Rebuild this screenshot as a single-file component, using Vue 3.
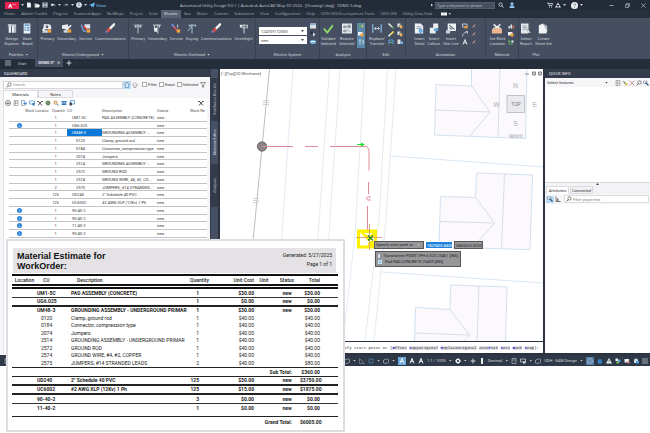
<script setup>
import { h, ref } from 'vue'

const glyphs = {
  file: '<path d="M2 1h6l2 2v8H2z" fill="#e8ebef"/>',
  open: '<path d="M1 3h4l1 1h4v2H4l-3 4z" fill="#c9ced6"/><path d="M4 6h8l-2 5H1z" fill="#f2f4f6"/>',
  save: '<path d="M1 1h10v10H1z" fill="#dfe3e8"/><path d="M3 1h6v4H3zM3 7h6v4H3z" fill="#5b6676"/>',
  undo: '<path d="M5 2L1 6l4 3V7c3-1 5 0 6 2 0-4-3-5-6-5z" fill="#e4e8ec"/>',
  redo: '<path d="M7 2l4 4-4 3V7C4 6 2 7 1 9c0-4 3-5 6-5z" fill="#7d8795"/>',
  print: '<circle cx="6" cy="6" r="5.6" fill="#eef1f4"/><path d="M3 5h6v4H3zM4 2h4v3H4z" fill="#a4b4c6"/>',
  plane: '<path d="M0 6L12 1 9 11 6 8 4 11 4 7z" fill="#66b9ea"/>',
  search: '<circle cx="5" cy="5" r="3.4" fill="none" stroke="#d5dae0" stroke-width="1.6"/><path d="M7.6 7.6L11 11" stroke="#d5dae0" stroke-width="2"/>',
  lens: '<circle cx="7" cy="5" r="3.4" fill="none" stroke="#555" stroke-width="1.4"/><path d="M4.5 7.6L1 11" stroke="#555" stroke-width="1.6"/>',
  user: '<circle cx="6" cy="3.4" r="3" fill="#8fcaf0"/><path d="M1 12c0-4 2-5 5-5s5 1 5 5z" fill="#8fcaf0"/>',
  cart: '<path d="M0 2h3l1 5h6l1-4H4" fill="none" stroke="#dfe3e8" stroke-width="1.5"/><circle cx="5" cy="10" r="1.2" fill="#dfe3e8"/><circle cx="9" cy="10" r="1.2" fill="#dfe3e8"/>',
  tri: '<path d="M6 1l3 5H3zM3 6l3 5H0zM9 6l3 5H6z" fill="#dfe3e8"/>',
  help: '<circle cx="6" cy="6" r="6" fill="#eef1f4"/><path d="M4 4.4c.3-2 4-2 4 .2 0 1.500-2 1.400-2 3M6 9v1.300" stroke="#4b5563" stroke-width="1.2" fill="none"/>',
  min: '<path d="M1 6h10" stroke="#cfd5dc" stroke-width="1.6"/>',
  restore: '<path d="M1 4h7v7H1zM4 4V1h7v7H8" fill="none" stroke="#cfd5dc" stroke-width="1.4"/>',
  close: '<path d="M1 1l10 10M11 1L1 11" stroke="#cfd5dc" stroke-width="1.5"/>',
  design: '<path d="M2 1h3v10H2zM6 2h3v9H6z" fill="#eceef1"/><path d="M1 1h10v2H1z" fill="#c2c8d0"/><path d="M9 3h2v8H9z" fill="#b5bcc6"/>',
  dash: '<path d="M2 0h8v12H2z" fill="#edf1f5"/><path d="M3 1h6v2H3zM3 4h2v2H3zM6 4h3v2H6zM3 7h2v2H3zM6 7h3v2H6z" fill="#6ba0cf"/>',
  ugPrimary: '<path d="M2 1h7l2 2v4H4L2 9H0l2-5z" fill="#e9edf0"/><circle cx="6" cy="4" r="1.600" fill="#4b5668"/><path d="M2 8h5v3H0z" fill="#d9dde2"/><path d="M7 7h4v4H7z" fill="#f2a13a"/>',
  ugSecondary: '<path d="M0 2l7-1 1 5-4 1-4-1z" fill="#e9edf0"/><path d="M11 2L4 9" stroke="#fff" stroke-width="1.6"/><path d="M2 8h5v3H2z" fill="#cfd5dc"/><path d="M7 7h4v4H7z" fill="#f2a13a"/>',
  ugService: '<path d="M4 1h7v5H5z" fill="#dfe4e9"/><path d="M0 1l3 8h4" stroke="#7fa3d8" stroke-width="1.500" fill="none"/><path d="M3 3l5 5" stroke="#e0564b" stroke-width="1.8"/><path d="M7 7h4v4H7z" fill="#f2a13a"/>',
  comms: '<path d="M11 1L5 7" stroke="#f1f3f5" stroke-width="3" stroke-linecap="round"/><path d="M6 6L2 10" stroke="#e0473f" stroke-width="3"/><path d="M2 9l-1 2" stroke="#5c8fe0" stroke-width="2"/>',
  pole: '<path d="M6 1v11M1 2h10M2 4h8M3 2v3M9 2v3" stroke="#b9c0ca" stroke-width="1.2" fill="none"/>',
  poleSec: '<path d="M7 1v11M1 2h10M3 2v3M9 2v3" stroke="#c9cfd7" stroke-width="1.200" fill="none"/><path d="M2 5h4v5H3z" fill="#eef0f3"/>',
  poleServ: '<path d="M1 1l7 8" stroke="#6d9be8" stroke-width="2"/><path d="M3 4l5 5" stroke="#e0473f" stroke-width="2"/><path d="M8 1v4" stroke="#dfe3e8"/><path d="M7 7h4v4H7z" fill="#f2a13a"/>',
  guy: '<path d="M6 1v11M2 2h9M6 3L1 9M3 2v2M10 2v2" stroke="#a9c4d8" stroke-width="1.200" fill="none"/>',
  street: '<path d="M6 1v11M1 2h10M2 2v3M10 2v4M3 5h6" stroke="#c6ccd4" stroke-width="1.3" fill="none"/><path d="M1 2h3v2H1z" fill="#eef0f3"/>',
  check: '<path d="M1 6l4 5 7-9" stroke="#86d86a" stroke-width="2.2" fill="none"/>',
  resolve: '<path d="M0 0h12v12H0z" fill="#e6e9ec"/><path d="M2 3h3v2H2zM7 2h3v3H7zM2 8h3v2H2zM6 7l4 3" fill="#8d96a3" stroke="#8d96a3"/>',
  replace: '<path d="M1 1v10M11 1v10" stroke="#8fc2e8" stroke-width="1.4"/><path d="M3 6h6M5 4L3 6l2 2M7 4l2 2-2 2" stroke="#d5dae0" fill="none"/>',
  detail: '<path d="M1 0h7l3 3v9H1z" fill="#f0f2f5"/><path d="M3 4h6M3 6h6" stroke="#8a94a3"/><circle cx="8" cy="9" r="2.600" fill="#69aee6"/>',
  callout: '<path d="M5 0h6v6H5z" fill="#edf0f3"/><path d="M1 5h7v7H1z" fill="#e9edf0"/><path d="M6 6h5v3H6z" fill="#5da7e6"/>',
  oneline: '<path d="M2 0h10v9H2z" fill="#eef1f4"/><path d="M4 2l6 5M4 5l3 2" stroke="#56616f" stroke-width="1.300"/><path d="M0 8h5v4H0z" fill="#c7cdd5"/>',
  work: '<path d="M2 1l8 7M10 1L3 8" stroke="#eceff2" stroke-width="1.800"/><path d="M0 7l6-2 6 2v5H0z" fill="#f0b58e"/><path d="M1 6l5-2 5 2" stroke="#fff" fill="none"/>',
  report: '<path d="M0 0h9v12H0z" fill="#e3e6ea"/><path d="M2 3h5M2 5h5M2 7h4" stroke="#8a94a3"/><path d="M7 6l5 5-3 .5z" fill="#fff" stroke="#444d5c" stroke-width=".4"/>',
  sheet: '<path d="M1 2l5-2 5 8-1 4H1z" fill="#f1f2f4"/><path d="M6 0l5 8v-5z" fill="#bcc3cc"/>',
  table: '<path d="M0 1h12v10H0z" fill="#e3e8ee"/><path d="M0 1h12v3H0zM4 4v7" fill="#89b7e0" stroke="#8a94a3" stroke-width=".6"/>',
  play: '<path d="M1 1h4v5H1z" fill="#1e2732"/><path d="M6 3l5 4-5 4z" fill="#cfe2f3"/>',
  db: '<ellipse cx="6" cy="6" rx="6" ry="4" fill="#6fb6e6"/><path d="M1 5h10" stroke="#e9f3fb" stroke-width="2"/>',
  flow: '<path d="M1 2l5 4-5 4" stroke="#5bb84b" stroke-width="1.800" fill="none"/><path d="M6 6h5M9 3v6" stroke="#e9c34a" stroke-width="1.600"/>',
  card: '<path d="M0 2h9v7H0z" fill="#eef1f4"/><circle cx="8" cy="8" r="3.500" fill="#f2a13a"/>',
  text: '<path d="M1 2h6M4 2v9M8 4h4M10 4v7" stroke="#dbe8f4" stroke-width="1.600"/>',
  pen: '<path d="M1 1l8 8" stroke="#eef1f4" stroke-width="3"/><path d="M7 7l4 4" stroke="#58b04e" stroke-width="3"/>',
  brush: '<path d="M11 1L5 7" stroke="#f5d94a" stroke-width="3.500"/><path d="M5 6l-4 5" stroke="#e8ebee" stroke-width="3"/>',
  nodes: '<path d="M2 11V2h8v9" stroke="#5aa6e0" stroke-width="2" fill="none"/><path d="M4 7h4" stroke="#62c05a" stroke-width="2"/>',
  copy: '<path d="M1 1h6v7H1z" fill="#e8ebee"/><path d="M5 4h6v7H5z" fill="#f0b26a" stroke="#454f61"/>',
  paste: '<path d="M1 1h6v9H1z" fill="#dfe3e8"/><path d="M6 5h6v5H6z" fill="#7fb2de"/>',
  leader: '<path d="M1 11C2 4 6 3 11 2M7 1h4v4" stroke="#e3e7eb" stroke-width="1.500" fill="none"/>',
  label: '<path d="M1 2h9v6H1z" fill="none" stroke="#e3e7eb" stroke-width="1.500"/><path d="M5 6h6v5H5z" fill="#e99b3c"/>',
  letter: '<path d="M2 11L6 1l4 10M3.500 7.500h5" stroke="#f0f2f5" stroke-width="1.800" fill="none"/>',
  erase: '<path d="M2 10l7-8M4 4l5 5" stroke="#c07c86" stroke-width="1.700"/>',
  bars: '<path d="M1 6h3v5H1zM5 3h3v8H5z" fill="#dfe3e8"/><path d="M9 5h3v6H9z" fill="#e0725f"/>',
  tree: '<path d="M2 1v9h8M2 5h5" stroke="#65b95b" stroke-width="1.800" fill="none"/><path d="M7 3h4v4H7z" fill="#eef1f4"/>',
  funnel: '<path d="M1 1h10L7 6v5L5 10V6z" fill="none" stroke="#555" stroke-width="1.200"/>',
  up: '<path d="M6 1l5 5H8v5H4V6H1z" fill="#fff" stroke="#777" stroke-width="1.100"/>',
  person: '<path d="M3 11V7L1 5l3-1V1h4v3l3 1-2 2v4z" fill="#d9ebfb" stroke="#4a6d90" stroke-width="1"/>',
  tprint: '<circle cx="6" cy="6" r="5" fill="none" stroke="#555" stroke-width="1.400"/><path d="M3 5h6v3H3z" fill="#777"/>',
  page: '<path d="M2 1h8v10H2z" fill="#fff" stroke="#777"/><path d="M2 4h8M2 7h8M5 1v10" stroke="#888"/>',
  export: '<path d="M1 1h6v10H1z" fill="#e8f2fb" stroke="#5a6a7a"/><path d="M5 7h6M9 4l3 3-3 3" stroke="#2f86d6" stroke-width="1.800" fill="none"/>',
  cal: '<path d="M1 2h10v6H1z" fill="#fff" stroke="#2f86d6" stroke-width="1.300"/><path d="M7 6h4v5H7z" fill="#2f6fb6"/>',
  tools: '<path d="M2 2l8 9M10 2L2 11" stroke="#4b4b4b" stroke-width="2"/><path d="M0 3h4M8 3h4" stroke="#4b4b4b" stroke-width="1.600"/>',
  gear: '<circle cx="6" cy="6" r="3.300" fill="none" stroke="#4f9a45" stroke-width="2.400"/><path d="M6 0v12M0 6h12M2 2l8 8M10 2l-8 8" stroke="#6a6a6a" stroke-width="1"/>',
  zoomin: '<circle cx="5" cy="5" r="3.500" fill="#f6d9a8" stroke="#a9733a" stroke-width="1.200"/><path d="M8 8l3 3" stroke="#2f86d6" stroke-width="2"/>',
  refresh: '<path d="M1 2h10v3H1zM1 7h10v3H1z" fill="#2f86d6"/><path d="M3 3l3 6 4-5" stroke="#333" fill="none"/>',
  win: '<path d="M3 1h8v7H3z" fill="#fff" stroke="#2f86d6" stroke-width="1.400"/><path d="M1 5h5v6H1z" fill="#3f4a57"/>',
  cross: '<path d="M1 1l10 10M11 1L1 11" stroke="#c98b93" stroke-width="1.700"/>',
  pick: '<path d="M1 1l5 8 1-4z" fill="#777"/><path d="M6 6h5v5H6z" fill="#d8c95c"/>',
  locate: '<path d="M1 2h7v5H1z" fill="#fff" stroke="#5a6a7a"/><path d="M5 5l6 6" stroke="#3d5a86" stroke-width="2.600"/>',
  sort: '<path d="M2 1v10h9" stroke="#555" stroke-width="1.600" fill="none"/><path d="M4 5h3v5H4z" fill="#777"/>',
  cube: '<path d="M1 4l6-2 4 1v6l-5 2-5-1z" fill="none" stroke="#b4bcc6" stroke-width="1.300"/>',
  green: '<path d="M1 1l5 2v6H1z" fill="#dfe6ec"/><path d="M4 4h7v7H4z" fill="#63c98a"/>',
  dashbox: '<path d="M2 2h8v8H2z" fill="none" stroke="#5f9fd0" stroke-width="1.500" stroke-dasharray="3 1"/>',
  angle: '<path d="M1 1v10h10M2 2l8 8" stroke="#8d97a5" stroke-width="1.300" fill="none"/>',
  figure: '<path d="M6 1L2 11M6 1l4 10M3 7h6M6 1v6" stroke="#eef2f6" stroke-width="1.800" fill="none"/>',
  cog: '<circle cx="6" cy="6" r="3.400" fill="none" stroke="#f0f3f6" stroke-width="2.400"/><path d="M6 0v2M6 10v2M0 6h2M10 6h2M2 2l1 1M9 9l1 1M10 2L9 3M2 10l1-1" stroke="#f0f3f6" stroke-width="1.800"/>',
  plus: '<path d="M6 1v10M1 6h10" stroke="#dfe4ea" stroke-width="1.800"/>',
  rule: '<path d="M4 0h4v12H4z" fill="#e9edf1"/>',
  sheetline: '<path d="M2 1h8v10H2zM2 4h8" fill="none" stroke="#b4bcc6" stroke-width="1.300"/>',
  monitor: '<path d="M1 2h10v6H1z" fill="none" stroke="#dfe4ea" stroke-width="1.400"/><path d="M6 7h5v4H6z" fill="#dfe4ea"/>',
  dot: '<circle cx="6" cy="6" r="5" fill="none" stroke="#b9cbe0" stroke-width="1.300"/><path d="M3 7l2 1 4-4" stroke="#b9cbe0" fill="none"/>',
  blue: '<circle cx="6" cy="7" r="4.500" fill="#3d97e6"/><path d="M4 6l3 2 4-6" stroke="#17416b" stroke-width="1.500" fill="none"/>',
  warn: '<path d="M6 0l6 11H0z" fill="#eef1f4"/><path d="M6 4v4" stroke="#333" stroke-width="1.300"/>',
  multi: '<path d="M1 1h5v5H1z" fill="#eef1f4"/><path d="M6 3h5v5H6z" fill="#4fa2e6"/><path d="M3 7h5v4H3z" fill="#8ac75a"/>',
  notify: '<path d="M1 2h9v7H1z" fill="#eef1f4"/><path d="M7 6h4v5H7z" fill="#de8a7e"/>',
  lock: '<path d="M2 5a4 4 0 018 0v5H2z" fill="#d5dbe2"/><path d="M6 6h6v5H6z" fill="#4fa2e6"/>',
  lines: '<path d="M0 2h12M0 6h12M0 10h12" stroke="#c9ced5" stroke-width="1.500"/>',
  cards: '<path d="M0 3h12v6H0z" fill="#f4f6f8"/><path d="M5 4h1v4H5z" fill="#9aa4b1"/>'
}
const Icon = (p) => h('svg', { viewBox: '0 0 12 12', 'aria-hidden': 'true', innerHTML: glyphs[p.name] })
Icon.props = ['name']

const menus = ['Home', 'Admin Toolkit', 'Plug-ins', 'Featured Apps', 'NetMaps', 'Project', 'Solar', 'Electric', 'Gas', 'Water', 'Comms', 'Substation', 'View', 'Configuration', 'Help', 'UDH-GIS Development Tools', 'UDH-GIS', 'Utility Data Hub']

const panels = [
  { key: 'palettes', title: 'Palettes', arrow: true, big: [['design', 'Design', 'Explorer'], ['dash', 'Dash', 'Board']] },
  { key: 'under', title: 'Electric Underground', arrow: true, big: [['ugPrimary', 'Primary'], ['ugSecondary', 'Secondary'], ['ugService', 'Service'], ['comms', 'Communications']] },
  { key: 'over', title: 'Electric Overhead', arrow: true, big: [['pole', 'Primary'], ['poleSec', 'Secondary'], ['poleServ', 'Service'], ['guy', 'Guying'], ['comms', 'Communications'], ['street', 'Streetlight']] },
  { key: 'system', title: 'Electric System', selects: true, big: [], small: [['table', 'play', 'db']] },
  { key: 'analysis', title: 'Analysis', big: [['check', 'Validate', 'Selected'], ['resolve', 'Resolve', 'Selected']], small: [['flow', 'card', 'text']], lit: true },
  { key: 'edit', title: 'Edit', big: [['replace', 'Replace/', 'Transfer']], small: [['pen', 'brush', 'nodes'], ['copy', 'copy', 'paste']] },
  { key: 'annotation', title: 'Annotation', big: [['detail', 'Insert', 'Detail'], ['callout', 'Insert', 'Callout'], ['oneline', 'Insert', 'One Line']], small: [['label', 'leader', 'letter'], ['erase', 'erase', 'erase']] },
  { key: 'material', title: 'Material', big: [['work', 'Set Work', 'Location']], small: [['bars', 'card', 'tree']] },
  { key: 'plot', title: 'Plot', big: [['report', 'Select', 'Report'], ['sheet', 'Create', 'Sheet Set']] }
]

const materials = [
  ['', '1', 'UM1-5C', 'PAD ASSEMBLY (CONCRETE)'],
  ['i', '1', 'UG6.025', ''],
  ['', '1', 'UM48-3', 'GROUNDING ASSEMBLY -...'],
  ['', '1', '0120', 'Clamp, ground rod'],
  ['', '1', '0184', 'Connector, compression type'],
  ['', '1', '2074', 'Jumpers'],
  ['', '1', '2514', 'GROUNDING ASSEMBLY -...'],
  ['', '1', '2572', 'GROUND ROD'],
  ['', '1', '2574', 'GROUND WIRE, #4, #2, CO...'],
  ['', '2', '2575', 'JUMPERS, #14 STRANDED...'],
  ['', '125', 'UD240', '2" Schedule 40 PVC'],
  ['', '125', 'UC6002', '#2 AWG XLP (12Kv)  1 Ph'],
  ['i', '1', '90-40-2', ''],
  ['i', '1', '90-40-2', ''],
  ['i', '1', '11-40-2', ''],
  ['i', '1', '90-40-2', '']
]

const estimate = [
  ['head line', 'UM1-5C', 'PAD ASSEMBLY (CONCRETE)', '1', '$30.00', 'new', '$30.00'],
  ['head thick', 'UG6.025', '', '1', '$0.00', 'new', '$0.00'],
  ['first', 'UM48-3', 'GROUNDING ASSEMBLY - UNDERGROUND PRIMAR', '1', '$30.00', 'new', '$30.00'],
  ['item', '0120', 'Clamp, ground rod', '1', '$40.00', '', '$40.00'],
  ['item alt', '0184', 'Connector, compression type', '1', '$40.00', '', '$40.00'],
  ['item', '2074', 'Jumpers', '1', '$40.00', '', '$40.00'],
  ['item alt', '2514', 'GROUNDING ASSEMBLY - UNDERGROUND PRIMAR', '1', '$40.00', '', '$40.00'],
  ['item', '2572', 'GROUND ROD', '1', '$40.00', '', '$40.00'],
  ['item alt', '2574', 'GROUND WIRE, #4, #2, COPPER', '1', '$40.00', '', '$40.00'],
  ['item', '2575', 'JUMPERS, #14 STRANDED LEADS', '2', '$40.00', '', '$80.00'],
  ['sum', '', '', '', '', 'Sub Total:', '$360.00'],
  ['head thick', 'UD240', '2" Schedule 40 PVC', '125', '$30.00', 'new', '$3750.00'],
  ['head thick', 'UC6002', '#2 AWG XLP (12Kv)  1 Ph', '125', '$15.00', 'new', '$1875.00'],
  ['head line', '90-40-2', '', '3', '$0.00', 'new', '$0.00'],
  ['last', '11-40-2', '', '1', '$0.00', 'new', '$0.00'],
  ['grand', '', '', '', '', 'Grand Total:', '$6005.00']
]

const toolbar = ['tprint', 'page', 'export', 'cal', 'tools', 'gear', 'zoomin', 'refresh', 'win']
const keywords = ['Offset', 'CopyOriginal', 'ReplaceOriginal', 'autoPath', 'Sets', 'Bank', 'Snap']
const hotAt = { autoPath: 4 }
const parts = (k) => {
  const i = hotAt[k] || 0
  return [k.slice(0, i), k[i], k.slice(i + 1)]
}

const voltage = ref('12470Y/7200V')
const state = ref('new')
</script>

<template>
  <div class="app">
    <header class="titlebar">
      <div class="quick">
        <button class="logo" aria-label="Application menu">A<span>•••</span></button>
        <i class="caret"></i>
        <Icon name="file" /><Icon name="open" /><Icon name="save" /><Icon name="undo" /><i class="caret"></i>
        <Icon name="redo" /><i class="caret"></i><Icon name="print" /><i class="caret"></i>
        <a class="share" href="#"><Icon name="plane" />Share</a>
      </div>
      <div class="caption">
        <span>Automated Utility Design 9.0.1 | Autodesk AutoCAD Map 3D 2024 - [Drawing1.dwg]</span>
        <span>DEMO 5.dwg</span>
      </div>
      <div class="find">
        <i class="play"></i>
        <input type="text" aria-label="Search" placeholder="Type a keyword or phrase" />
        <Icon name="search" /><Icon name="user" />
      </div>
      <div class="extras"><Icon name="cart" /><Icon name="tri" /><i class="caret"></i><Icon class="round" name="help" /><i class="caret"></i></div>
      <div class="window"><Icon name="min" /><Icon name="restore" /><Icon name="close" /></div>
    </header>

    <nav class="menu">
      <a v-for="m in menus" :key="m" href="#" :class="{ on: m === 'Electric' }">{{ m }}</a>
      <Icon name="cards" /><i class="caret"></i>
    </nav>

    <section class="ribbon">
      <div v-for="p in panels" :key="p.key" class="panel" :class="p.key">
        <div class="tools">
          <div v-if="p.selects" class="selects">
            <div class="pull"><select v-model="voltage" aria-label="Voltage"><option>12470Y/7200V</option></select><i class="caret"></i></div>
            <div class="pull"><select v-model="state" aria-label="State"><option>new</option></select><i class="caret"></i></div>
          </div>
          <button v-for="b in p.big" :key="b[1] + b[2]" class="big">
            <Icon :name="b[0]" /><span>{{ b[1] }}</span><span v-if="b[2]">{{ b[2] }}</span>
          </button>
          <div v-for="(col, ci) in p.small" :key="ci" class="col" :class="{ lit: p.lit }">
            <Icon v-for="(s, si) in col" :key="si" :name="s" />
          </div>
        </div>
        <div class="name">{{ p.title }}<i v-if="p.arrow" class="caret"></i></div>
      </div>
    </section>

    <nav class="docs">
      <Icon name="lines" />
      <a href="#">Start</a><i class="slash">/</i>
      <a class="on" href="#">DEMO 5*<b>✕</b></a>
      <button aria-label="New drawing"><Icon name="plus" /></button><i class="slash">/</i>
    </nav>

    <main class="work">
      <section class="dashboard">
        <h2>DASHBOARD</h2>
        <div class="box">
          <div class="filterbar">
            <label class="search"><Icon name="lens" /><input type="text" aria-label="Search materials" placeholder="Search" /></label>
            <button class="lit" aria-label="Person"><Icon name="person" /></button>
            <button aria-label="Up"><Icon name="up" /></button>
            <label class="first"><input type="checkbox" />Filter</label>
            <label><input type="checkbox" />Exact</label>
            <label><input type="checkbox" />Selected</label>
            <Icon name="funnel" />
          </div>
          <div class="tabs"><button class="on">Materials</button><button>Notes</button></div>
          <div class="sheet">
            <div class="icons"><Icon v-for="t in toolbar" :key="t" :name="t" /><Icon class="end" name="tools" /></div>
            <table>
              <colgroup><col class="c0" /><col class="c1" /><col class="c2" /><col class="c3" /><col class="c4" /><col class="c5" /><col class="c6" /></colgroup>
              <thead><tr><th></th><th>Work Locatio</th><th>Quantit</th><th>CU</th><th>Description</th><th>Status</th><th>Work Ne</th></tr></thead>
              <tbody>
                <tr v-for="(r, i) in materials" :key="i">
                  <td><span v-if="r[0]" class="info">i</span></td><td></td>
                  <td class="num">{{ r[1] }}</td>
                  <td class="cu" :class="{ sel: i === 2, sub: i > 2 && i < 10 }">{{ r[2] }}</td>
                  <td>{{ r[3] }}</td><td>new</td><td></td>
                </tr>
              </tbody>
            </table>
          </div>
        </div>
      </section>

      <nav class="side">
        <button>Validation Results</button><button class="on">Material Editor</button><button>Analysis</button>
      </nav>

      <section class="canvas">
        <svg class="map" viewBox="220 69 323 272" preserveAspectRatio="xMinYMin slice">
          <g fill="none" stroke="#e4ebf4" stroke-width="1">
            <path d="M293 69L275 341M329.500 69L311 341M340 69L322 341M364.500 69L355 235 343 341M387.500 69L379 220 365 341M396 69L386 220 374 341" />
            <path d="M391 156L543 167M382 272L543 283" stroke="#d9e6f2" />
          </g>
          <g fill="#fbf9fc" stroke="#d2e1ef" stroke-width="1">
            <path d="M471.500 69V86L436 84.500 434.500 135 525.500 138.500 527 69" />
            <path d="M476.500 173L532.500 175 530 249.600 439 247 440.500 196.500 475.500 197.500z" />
            <path d="M414.500 342L415.500 307.500 450 309.500 450.500 285 507 287 505.500 342" />
          </g>
          <g fill="none" stroke="#dcdce4" stroke-width="1">
            <path d="M471.500 86L490 112 470 136M435 110L490 112M500 69L498 137" />
            <path d="M475.500 197.500L494.500 223 472 248M439.500 221.500L494 223M504.500 174L501.500 249" />
            <path d="M450 309.500L469.500 335 464 341M415 333L469 335M479 286L477 341" />
          </g>
          <path d="M269.500 69L243.500 341" stroke="#bdbdbd" stroke-width="1" />
          <g fill="#fff" stroke="#c9c9c9" stroke-width=".8">
            <path d="M263 100.500h6M263 102.500h6M263 104.500h6M253 198.500h6M253 200.500h6M253 202.500h6" />
          </g>
          <circle cx="262" cy="146.500" r="4.600" fill="#8b8788" stroke="#66605f" />
          <g fill="none" stroke="#e08a97" stroke-width="1">
            <path d="M262 146.500h31M305 146.500h13M330 146.500h35q4 0 4 5v19M368.500 182v12M367.500 206v24" />
            <path d="M371 197h-3q-4 1.500 0 3h3" />
          </g>
          <path d="M357 144h4v-1.500l4 2-4 2V145h-4z" fill="#1ddd2b" />
          <path d="M358.500 231h17v16h-17z" fill="#fff" stroke="#fff200" stroke-width="3" />
          <path d="M360 232l9 10 8-10zM369 241h7v7h-9z" fill="#fff200" />
          <path d="M363 233h10l-4 3z" fill="#fff" />
          <path d="M356 237.500h26M369.500 224v26" stroke="#d98d72" stroke-width=".8" />
          <path d="M368 235.500l5 5M373 235.500l-5 5" stroke="#1f8a2a" stroke-width="1.300" />
          <path d="M507 95.500h17.500v17H507z" fill="#e9e9ee" stroke="#c2c2c6" />
          <path d="M509 136h14" stroke="#e3e3ea" stroke-width="4" />
          <path d="M525 74h4M532.500 72h3v3h-3zM538.500 72h3v3h-3z" fill="#ccc" stroke="#888" stroke-width="1" />
          <g class="compass"><text x="515.500" y="87.500">N</text><text x="496.500" y="106.500">W</text><text x="534.500" y="106.500">E</text><text x="515.500" y="125.500">S</text></g>
          <g class="cube"><text x="516" y="106">TOP</text><text class="wcs" x="515.500" y="137.500">WCS ▽</text></g>
        </svg>
        <p class="view">[–][Top][2D Wireframe]</p>
        <div class="dyn">
          <label class="prompt" for="px">Specify start point or <b>▫</b></label>
          <input id="px" type="text" class="hot" value="1829403.8450" />
          <input type="text" aria-label="Y" value="5865023.0030" />
        </div>
        <ul class="pop">
          <li><i></i>Transformer PDMT.1PH.6.025 25461 [INS]</li>
          <li><i></i>Pad PAD.CONCRETE 25459 [INS]</li>
        </ul>
        <p class="cmd">Specify start point or [<template v-for="(k, i) in keywords" :key="k">{{ i ? ' ' : '' }}<span>{{ parts(k)[0] }}<b>{{ parts(k)[1] }}</b>{{ parts(k)[2] }}</span></template>]:</p>
      </section>

      <aside class="info-pane">
        <h2>QUICK INFO</h2>
        <div class="pick"><label>Select features<i class="caret"></i></label><Icon name="page" /><Icon name="pick" /><Icon name="cross" /><Icon name="lens" /><Icon name="locate" /></div>
        <div class="list"></div>
        <div class="split"><i></i></div>
        <div class="tabs"><button class="on">Attributes</button><button>Connected</button></div>
        <div class="props"><button class="lit" aria-label="Grouped"><Icon name="locate" /></button><button aria-label="Sorted"><Icon name="sort" /></button>
          <label><Icon name="lens" /><input type="text" aria-label="Filter" placeholder="Filter properties" /></label></div>
      </aside>
    </main>

    <footer class="status">
      <Icon class="start" name="sheetline" />
      <i class="caret"></i><Icon name="green" /><Icon name="cube" /><i class="caret"></i><Icon name="angle" /><Icon name="dashbox" /><i class="caret"></i><Icon name="cube" /><i class="caret"></i>
      <span class="lit"><Icon name="figure" /></span><Icon name="figure" /><Icon name="figure" /><span>1:1 / 100%</span><i class="caret"></i>
      <Icon name="cog" /><i class="caret"></i><Icon name="plus" /><Icon name="rule" /><span>Decimal</span><i class="caret"></i><Icon name="sheetline" /><Icon name="monitor" /><i class="caret"></i>
      <Icon name="cube" /><span>UDH - EAM Design</span><i class="caret"></i><span class="lit dim"><Icon name="dot" /></span><Icon name="blue" /><Icon name="warn" /><Icon name="multi" /><Icon name="notify" /><Icon name="lock" /><Icon name="lines" />
    </footer>

    <article class="report">
      <header>
        <h1>Material Estimate for<br />WorkOrder:</h1>
        <div><p>Generated: 5/27/2025</p><p>Page 1 of 1</p></div>
      </header>
      <table>
        <colgroup><col class="k0" /><col class="k1" /><col class="k2" /><col class="k3" /><col class="k4" /><col class="k5" /><col class="k6" /><col class="k7" /><col /></colgroup>
        <thead><tr><th>Location</th><th class="desc">CU</th><th class="desc">Description</th><th>Quantity</th><th class="r">Unit Cost</th><th>Unit</th><th>Status</th><th class="r">Total</th><th></th></tr></thead>
        <tbody>
          <tr v-for="(r, i) in estimate" :key="i" :class="r[0]">
            <td></td><td class="code">{{ r[1] }}</td><td>{{ r[2] }}</td><td class="q">{{ r[3] }}</td><td class="r">{{ r[4] }}</td>
            <td></td><td class="s"><span>{{ r[5] }}</span></td><td class="r">{{ r[6] }}</td><td></td>
          </tr>
        </tbody>
      </table>
    </article>
  </div>
</template>

<style>
body { margin: 0; background: #fff; }
</style>

<style scoped>
* { box-sizing: border-box; }
.app { position: relative; min-height: 100vh; overflow: hidden; font: 4px/5px Roboto, "Open Sans", sans-serif; color: #333; background: #fff; }
button, input, select { font: inherit; color: inherit; margin: 0; padding: 0; border: 0; background: none; border-radius: 0; min-width: 0; }
button { display: flex; align-items: center; justify-content: center; }
a { color: inherit; text-decoration: none; }
h1, h2, p, ul { margin: 0; padding: 0; font-weight: 400; list-style: none; }
i { font-style: normal; }
svg { display: block; flex: none; width: 6px; height: 6px; }
.caret { flex: none; width: 3px; height: 2px; background: currentColor; clip-path: polygon(0 0, 100% 0, 50% 100%); }

.titlebar { display: flex; align-items: center; height: 10px; background: #222b37; color: #c6ccd4; }
.quick { display: flex; align-items: center; gap: 2px; width: 180px; padding-left: 5px; }
.logo { width: 14px; height: 7px; background: #e5224f; color: #fff; font-weight: 700; font-size: 6px; }
.logo span { font-size: 3px; }
.share { display: flex; align-items: center; gap: 1px; color: #79bfe8; }
.caption { display: flex; gap: 3px; flex: 1; white-space: nowrap; font-family: "Open Sans", sans-serif; }
.find { display: flex; align-items: center; gap: 3px; width: 116px; }
.find input { flex: none; width: 60px; height: 7px; padding-left: 1px; background: #454f60; border: 1px solid #525d6e; }
input::placeholder { color: inherit; opacity: .8; }
.play { width: 2px; height: 3px; margin-right: -1px; background: #ddd; clip-path: polygon(0 0, 100% 50%, 0 100%); }
.find svg:last-child { margin-left: 2px; }
.extras { display: flex; align-items: center; gap: 2px; width: 62px; }
.extras .round { margin-left: 3px; width: 7px; height: 7px; }
.window { display: flex; gap: 11px; width: 41px; }
.window svg { width: 5px; height: 5px; }

.menu { display: flex; align-items: center; height: 8px; padding-left: 1px; background: #26303c; color: #a3abb6; white-space: nowrap; font-family: "Open Sans", sans-serif; }
.menu a { padding: 0 3px; line-height: 8px; }
.menu a.on { background: #566173; color: #f2f4f6; }
.menu svg { margin: 0 1px 0 6px; }

.ribbon { display: flex; height: 41px; background: #454f61; color: #ccd2da; }
.panel { flex: none; display: flex; flex-direction: column; border-right: 1px solid #39424f; }
.palettes { width: 38px; } .under { width: 91px; } .over { width: 127px; } .system { width: 64px; }
.analysis { width: 47px; } .edit { width: 39px; } .annotation { width: 80px; } .material { width: 33px; }
.plot { width: 34px; border-right: 0; }
.tools { display: flex; justify-content: center; gap: 3px; flex: 1; padding-top: 5px; }
.big { flex-direction: column; justify-content: flex-start; height: 24px; white-space: nowrap; }
.big svg { width: 10px; height: 11px; margin-bottom: 2px; }
.selects { display: flex; flex-direction: column; gap: 1px; padding-top: 4px; }
.pull { display: flex; align-items: center; width: 48px; height: 8px; padding: 0 3px 0 2px; background: #fff; color: #444; }
.pull select { appearance: none; flex: 1; height: 8px; }
.col { display: flex; flex-direction: column; gap: 2px; }
.col.lit { padding: 0 1px; height: 25px; background: #5b87ab; }
.name { display: flex; align-items: center; justify-content: center; gap: 2px; height: 8px; padding-bottom: 1px; }

.docs { display: flex; align-items: center; gap: 3px; height: 10px; padding: 0 0 2px 5px; background: #242e3a; color: #c3c9d1; }
.docs a { padding: 0 1px; }
.docs a:first-of-type { margin-left: 3px; }
.docs .slash { color: #56606e; }
.docs .on { display: flex; gap: 3px; height: 8px; padding: 0 3px; background: #454f61; color: #fff; line-height: 8px; font-weight: 500; }
.docs .on b { font-weight: 400; }

.work { display: flex; background: #343c4d; }
h2 { height: 8px; padding-left: 4px; font-size: 4px; line-height: 9px; color: #e3e6ea; background: #343b4b; }
.dashboard { width: 211px; display: flex; flex-direction: column; }
.box { flex: 1; margin-right: 1px; padding: 3px 3px 0; background: #f6f6f8; }
.filterbar { display: flex; align-items: center; height: 9px; }
.filterbar .search { display: flex; align-items: center; gap: 1px; width: 120px; height: 8px; padding-left: 2px; border: 1px solid #d5d5da; background: #fff; }
.filterbar .search input { flex: 1; color: #777; }
.filterbar button { width: 8px; height: 8px; }
.lit { background: #b9dcf7; }
.filterbar label { display: flex; align-items: center; gap: 1px; margin-right: 2px; }
.filterbar .search { margin-right: 0; }
.filterbar .first { margin-left: 3px; }
input[type=checkbox] { appearance: none; width: 5px; height: 5px; border: 1px solid #aaa; background: #fff; }
.tabs { display: flex; height: 8px; margin-top: 1px; }
.tabs button { width: 35px; border: 1px solid #dcdce0; }
.tabs .on { background: #fff; border-bottom: 0; }
.sheet { height: 255px; background: #fff; border-left: 1px solid #e0e0e4; }
.sheet .icons { display: flex; align-items: center; gap: 2px; height: 9px; padding-left: 1px; }
.icons .end { margin-left: auto; margin-right: 3px; }
table { border-collapse: separate; border-spacing: 0; table-layout: fixed; width: 100%; }
td, th { padding: 0; font-weight: 400; text-align: left; white-space: nowrap; line-height: 5px; }
.sheet th { height: 7px; color: #555; }
.sheet td { height: 8px; line-height: 5px; border-bottom: 1px solid #c4c4c4; }
.sheet tr:nth-child(4n+2) td { height: 7px; }
.sheet td:first-child { text-align: right; }
.sheet table { margin-left: 5px; width: 198px; }
.c0 { width: 16px; } .c1 { width: 27px; } .c2 { width: 15px; } .c3 { width: 35px; } .c4 { width: 55px; } .c5 { width: 33px; } .c6 { width: 17px; }
.sheet .num { text-align: center; padding-right: 8px; }
.cu { padding-left: 5px; }
.cu.sub { padding-left: 9px; }
.cu.sel { background: #0a78d7; color: #fff; }
.info { display: inline-block; width: 5px; height: 5px; border-radius: 50%; background: #2b83dc; color: #fff; text-align: center; margin-right: 3px; }

.side { width: 9px; display: flex; flex-direction: column; background: #465064; border-right: 2px solid #2b3341; padding-top: 9px; }
.side button { height: 43px; background: #343b4b; color: #aab1bd; writing-mode: vertical-rl; transform: rotate(180deg); white-space: nowrap; }
.side .on { background: #465064; color: #d6dae0; }

.canvas { position: relative; flex: 1; min-width: 0; background: #fff; border-bottom: 2px solid #2b3341; }
.map { width: 100%; height: 272px; }
.compass { font: 700 7px "Liberation Sans", sans-serif; text-anchor: middle; fill: #c6c6ca; }
.cube { font-size: 5px; text-anchor: middle; fill: #777; }
.wcs { font-size: 4px; fill: #aaa; }
.view { position: absolute; left: 1px; top: 2px; color: #555; }
.dyn { position: absolute; left: 154px; top: 172px; display: flex; gap: 1px; height: 8px; white-space: nowrap; }
.prompt { width: 50px; padding-left: 1px; line-height: 6px; background: #97979a; border: 1px solid #555; color: #222; }
.dyn input { width: 29px; height: 8px; padding-left: 1px; background: #97979a; border: 1px solid #555; color: #222; }
.dyn .hot { width: 28px; border-color: #fff; background: #1f83dc; color: #fff; }
.prompt b { color: #fff; padding-left: 4px; }
.pop { position: absolute; left: 155px; top: 182px; width: 86px; padding: 1px 2px; background: #97979a; border: 1px solid #555; color: #222; line-height: 6px; white-space: nowrap; }
.pop li { display: flex; align-items: center; gap: 3px; }
.pop i { width: 4px; height: 4px; background: #8fc3ea; border: 1px solid #c9e2f5; }
.cmd { height: 12px; border-top: 1px solid #2b3341; text-align: right; padding-right: 4px; font: 4px/12px "Liberation Mono", monospace; white-space: pre; color: #333; }
.cmd span { background: #e0e0e6; }
.cmd b { color: #1c22d8; }

.info-pane { width: 107px; border-left: 2px solid #2b3341; display: flex; flex-direction: column; background: #fff; border-bottom: 2px solid #2b3341; }
.info-pane h2 { height: 9px; }
.pick { display: flex; align-items: center; gap: 1px; height: 9px; padding: 0 1px 0 2px; background: #f6f5f8; }
.pick label { display: flex; flex: 1; align-items: center; justify-content: space-between; padding-right: 6px; }
.list { height: 95px; }
.split { display: flex; justify-content: center; height: 4px; background: #f4f3f6; border-top: 1px solid #d6d6da; }
.split i { width: 3px; height: 2px; background: #444; clip-path: polygon(50% 0, 100% 100%, 0 100%); }
.info-pane .tabs { margin-top: 0; background: #f2f1f5; padding-left: 1px; gap: 1px; }
.info-pane .tabs button { width: 23px; }
.props { display: flex; align-items: center; height: 10px; padding: 0 1px; background: #f6f5f8; }
.props button { width: 8px; height: 7px; }
.props label { display: flex; flex: 1; align-items: center; gap: 1px; height: 8px; margin-left: 2px; padding-left: 1px; background: #fff; border: 1px solid #ddd; }
.props input { font-style: italic; color: #666; }

.status { display: flex; align-items: center; justify-content: flex-end; gap: 3px; height: 11px; padding-right: 2px; background: #2e3847; color: #d2d8df; white-space: nowrap; }
.status .start { margin-right: auto; margin-left: 4px; }
.status .lit { padding: 1px; background: #6ba9dc; }
.status .dim { background: #567fa8; }

.report { position: absolute; left: 6px; top: 239px; width: 339px; padding: 7px 5px 2px 4px; background: #fff; border: 2px solid #dddde2; border-radius: 1px; color: #222; font: 5px/6px Roboto, "Liberation Sans", sans-serif; }
.report header { display: flex; justify-content: space-between; height: 25px; margin: 0 2px 1px 1px; padding: 3px 4px; background: #e4e2e5; }
.report h1 { font: 700 9px/10px "Liberation Sans", Arial, sans-serif; color: #111; }
.report header div { text-align: right; line-height: 9px; }
.report th { height: 15px; font-weight: 500; text-align: center; border-top: 2px solid #111; border-bottom: 5px double #111; }
.report td { height: 8px; }
.report .alt td { height: 7px; }
.report .first td { height: 7px; }
.report .head td, .report .first td, .report .last td, .report .sum td, .report .grand td { font-weight: 700; }
.report .head td { height: 9px; border-bottom: 1px solid #333; }
.report .thick td { border-bottom: 2px solid #222; }
.report .sum td { height: 10px; border-top: 1px solid #222; border-bottom: 1px solid #222; }
.report .last td { height: 13px; padding-bottom: 4px; border-bottom: 1px solid #222; }
.report .grand td { height: 11px; }
.k0 { width: 25px; } .k1 { width: 34px; } .k2 { width: 114px; } .k3 { width: 29px; } .k4 { width: 40px; } .k5 { width: 20px; } .k6 { width: 26px; } .k7 { width: 20px; }
.report .item .code { padding-left: 4px; }
.report .q { text-align: right; padding-right: 15px; }
.report .r { text-align: right; }
.report .s { direction: rtl; text-align: center; }
.report .s span { display: inline-block; direction: ltr; }
.report .desc { text-align: left; padding-left: 6px; }
.report .sum .s, .report .grand .s { text-align: right; padding-right: 8px; }
</style>
